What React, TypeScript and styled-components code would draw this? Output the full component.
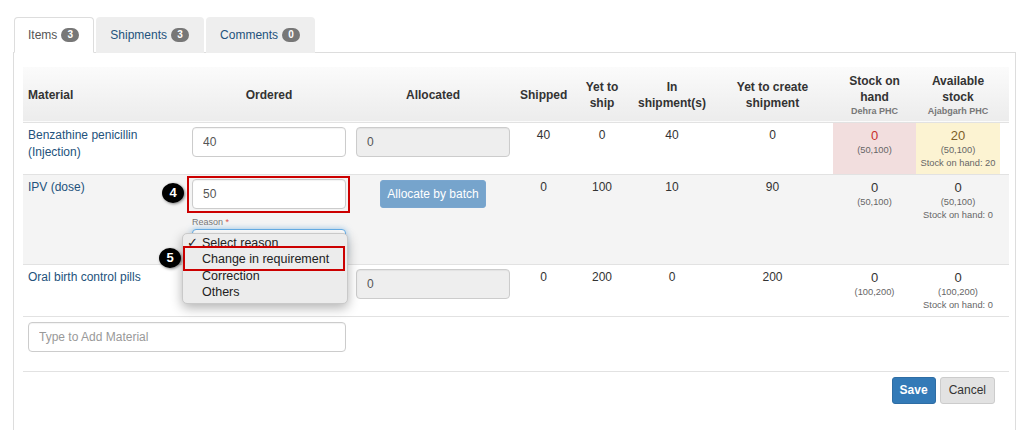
import React from 'react';
import styled, { createGlobalStyle, css } from 'styled-components';

const GlobalStyle = createGlobalStyle`
  html, body {
    margin: 0;
    padding: 0;
    background: #fff;
  }
  body {
    font-family: "Liberation Sans", Arial, Helvetica, sans-serif;
    font-size: 12px;
    color: #333;
  }
  * {
    box-sizing: border-box;
  }
`;

const Page = styled.div`
  padding: 17px 0 0 13px;
  width: 1016px;
`;

const TabList = styled.ul`
  list-style: none;
  margin: 0;
  padding: 0 0 0 1px;
  display: flex;
  gap: 2px;
  height: 35px;
  position: relative;
  z-index: 1;
`;

const Tab = styled.li<{ $active?: boolean }>`
  height: 36px;
  padding: 0 14px 0 13px;
  display: flex;
  align-items: center;
  gap: 4px;
  border: 1px solid transparent;
  border-radius: 4px 4px 0 0;
  font-size: 12px;
  color: #23527c;
  background: #eee;
  ${p =>
    p.$active &&
    css`
      background: #fff;
      color: #555;
      border-color: #ddd #ddd transparent #ddd;
    `}
`;

const Badge = styled.span`
  display: inline-block;
  min-width: 18px;
  height: 14px;
  padding: 0 4px;
  border-radius: 7px;
  background: #777;
  color: #fff;
  font-size: 10px;
  font-weight: bold;
  line-height: 14px;
  text-align: center;
`;

const Panel = styled.div`
  width: 1003px;
  border: 1px solid #ddd;
  padding: 14px 5px 30px 9px;
`;

const Table = styled.table`
  width: 986px;
  table-layout: fixed;
  border-collapse: collapse;
  border-spacing: 0;
`;

const HeadRow = styled.tr`
  height: 55px;
  background: linear-gradient(to bottom, #fbfbfb 0%, #ececec 100%);
  border-bottom: 1px solid #e2e2e2;
`;

const Th = styled.th<{ $left?: boolean }>`
  font-weight: bold;
  font-size: 12px;
  line-height: 16px;
  color: #333;
  text-align: ${p => (p.$left ? 'left' : 'center')};
  vertical-align: middle;
  padding: 2px 5px 0;
`;

const SubHead = styled.div`
  font-size: 9px;
  line-height: 12px;
  color: #777;
`;

const Row = styled.tr<{ $shade?: boolean; $h: number }>`
  height: ${p => p.$h}px;
  background: ${p => (p.$shade ? '#f4f4f4' : '#fff')};
  border-bottom: 1px solid #e2e2e2;
`;

const Td = styled.td<{ $tone?: 'danger' | 'warning'; $left?: boolean }>`
  vertical-align: top;
  padding: 4px 5px;
  line-height: 17px;
  font-size: 12px;
  text-align: ${p => (p.$left ? 'left' : 'center')};
  background: ${p =>
    p.$tone === 'danger' ? '#f2dede' : p.$tone === 'warning' ? '#fcf3d2' : 'transparent'};
`;

const StockTd = styled(Td)`
  padding: 4px 1px;
  white-space: nowrap;
`;

const OrderedTd = styled(Td)`
  position: relative;
`;

const MaterialName = styled.span`
  color: #23527c;
  display: block;
`;

const Input = styled.input<{ $disabled?: boolean }>`
  display: block;
  width: 100%;
  height: 30px;
  padding: 0 10px;
  border: 1px solid #ccc;
  border-radius: 4px;
  font-family: inherit;
  font-size: 12px;
  color: #555;
  background: ${p => (p.$disabled ? '#eee' : '#fff')};
  box-shadow: inset 0 1px 1px rgba(0, 0, 0, 0.05);
  outline: none;

  &::placeholder {
    color: #999;
  }
`;

const Label = styled.div`
  margin-top: 7px;
  text-align: left;
  font-size: 9px;
  line-height: 12px;
  color: #777;

  span {
    color: #d9534f;
  }
`;

const FakeSelect = styled.div`
  margin-top: 1px;
  height: 30px;
  border: 1px solid #66afe9;
  border-radius: 4px;
  background: #fff;
  box-shadow: 0 0 6px rgba(102, 175, 233, 0.6);
`;

const BatchButton = styled.button`
  margin: 1px auto 0;
  display: block;
  width: 106px;
  height: 28px;
  border: 1px solid #7aa6cf;
  border-radius: 3px;
  background: #76a4cc;
  color: #fff;
  font-family: inherit;
  font-size: 12px;
  padding: 0;
`;

const StockValue = styled.div<{ $tone?: 'danger' | 'warning' }>`
  font-size: 13px;
  line-height: 17px;
  color: ${p => (p.$tone === 'danger' ? '#c9302c' : p.$tone === 'warning' ? '#7d5f2a' : '#333')};
`;

const StockNote = styled.div`
  font-size: 9.3px;
  line-height: 13px;
  color: #666;
`;

const AddRow = styled.tr`
  height: 55px;
  border-bottom: 1px solid #e2e2e2;
`;

const AddTd = styled.td`
  vertical-align: top;
  padding: 5px 5px 0 5px;
`;

const Footer = styled.div`
  display: flex;
  justify-content: flex-end;
  gap: 4px;
  padding: 5px 14px 0 0;
  width: 986px;
`;

const Button = styled.button<{ $primary?: boolean }>`
  height: 27px;
  padding: 0 ${p => (p.$primary ? 7 : 8)}px;
  border-radius: 3px;
  font-family: inherit;
  font-size: 12px;
  border: 1px solid ${p => (p.$primary ? '#2e6da4' : '#ccc')};
  background: ${p => (p.$primary ? '#337ab7' : '#e2e2e2')};
  color: ${p => (p.$primary ? '#fff' : '#333')};
  font-weight: ${p => (p.$primary ? 'bold' : 'normal')};
`;

/* overlays: native select popup and tutorial call-outs */

const Callout = styled.div<{ $x: number; $y: number; $w: number; $h: number }>`
  position: absolute;
  left: ${p => p.$x}px;
  top: ${p => p.$y}px;
  width: ${p => p.$w}px;
  height: ${p => p.$h}px;
  border: 2px solid #cc0000;
  z-index: 4;
  pointer-events: none;
`;

const Step = styled.div<{ $x: number; $y: number }>`
  position: absolute;
  left: ${p => p.$x}px;
  top: ${p => p.$y}px;
  width: 22px;
  height: 20px;
  border-radius: 50%;
  background: #000;
  color: #fff;
  font-weight: bold;
  font-size: 13px;
  line-height: 20px;
  text-align: center;
  box-shadow: 1px 1px 3px rgba(0, 0, 0, 0.5);
  z-index: 5;
`;

const Popup = styled.ul`
  position: absolute;
  left: -5px;
  top: 58px;
  width: 166px;
  height: 71px;
  margin: 0;
  padding: 1px 0 0;
  list-style: none;
  background: #ececec;
  border: 1px solid #c9c9c9;
  border-radius: 5px;
  box-shadow: 0 4px 12px rgba(0, 0, 0, 0.3);
  z-index: 3;
  text-align: left;
`;

const PopupItem = styled.li`
  position: relative;
  height: 16.5px;
  line-height: 16.5px;
  padding-left: 19px;
  font-size: 12.5px;
  color: #222;
  white-space: nowrap;
`;

const Check = styled.span`
  position: absolute;
  left: 4px;
  top: 0;
`;

type Stock = { value: string; range: string; note?: string; tone?: 'danger' | 'warning' };

const StockCell = ({ s }: { s: Stock }) => (
  <StockTd $tone={s.tone}>
    <StockValue $tone={s.tone}>{s.value}</StockValue>
    <StockNote>{s.range}</StockNote>
    {s.note && <StockNote>{s.note}</StockNote>}
  </StockTd>
);

const widths = [164, 164, 164, 57, 60, 80, 121, 83, 84, 9];

export default function App() {
  return (
    <Page>
      <GlobalStyle />
      <TabList>
        <Tab $active>
          Items <Badge>3</Badge>
        </Tab>
        <Tab>
          Shipments <Badge>3</Badge>
        </Tab>
        <Tab>
          Comments <Badge>0</Badge>
        </Tab>
      </TabList>
      <Panel>
        <Table>
          <colgroup>
            {widths.map((w, i) => (
              <col key={i} style={{ width: w }} />
            ))}
          </colgroup>
          <thead>
            <HeadRow>
              <Th $left>Material</Th>
              <Th>Ordered</Th>
              <Th>Allocated</Th>
              <Th>Shipped</Th>
              <Th>
                Yet to
                <br />
                ship
              </Th>
              <Th>
                In
                <br />
                shipment(s)
              </Th>
              <Th>
                Yet to create
                <br />
                shipment
              </Th>
              <Th>
                Stock on
                <br />
                hand
                <SubHead>Dehra PHC</SubHead>
              </Th>
              <Th>
                Available
                <br />
                stock
                <SubHead>Ajabgarh PHC</SubHead>
              </Th>
              <Th />
            </HeadRow>
          </thead>
          <tbody>
            <Row $h={51}>
              <Td $left>
                <MaterialName>
                  Benzathine penicillin
                  <br />
                  (Injection)
                </MaterialName>
              </Td>
              <Td>
                <Input defaultValue="40" />
              </Td>
              <Td>
                <Input $disabled readOnly defaultValue="0" />
              </Td>
              <Td>40</Td>
              <Td>0</Td>
              <Td>40</Td>
              <Td>0</Td>
              <StockCell s={{ value: '0', range: '(50,100)', tone: 'danger' }} />
              <StockCell s={{ value: '20', range: '(50,100)', note: 'Stock on hand: 20', tone: 'warning' }} />
              <Td />
            </Row>
            <Row $h={90} $shade>
              <Td $left>
                <MaterialName>IPV (dose)</MaterialName>
              </Td>
              <OrderedTd>
                <Input defaultValue="50" />
                <Label>
                  Reason <span>*</span>
                </Label>
                <FakeSelect />
                <Callout $x={0} $y={1} $w={163} $h={37} />
                <Step $x={-25} $y={8}>4</Step>
                <Popup>
                  <PopupItem>
                    <Check>✓</Check>Select reason
                  </PopupItem>
                  <PopupItem>Change in requirement</PopupItem>
                  <PopupItem>Correction</PopupItem>
                  <PopupItem>Others</PopupItem>
                </Popup>
                <Callout $x={-4} $y={71} $w={162} $h={25} />
                <Step $x={-28} $y={73}>5</Step>
              </OrderedTd>
              <Td>
                <BatchButton>Allocate by batch</BatchButton>
              </Td>
              <Td>0</Td>
              <Td>100</Td>
              <Td>10</Td>
              <Td>90</Td>
              <StockCell s={{ value: '0', range: '(50,100)' }} />
              <StockCell s={{ value: '0', range: '(50,100)', note: 'Stock on hand: 0' }} />
              <Td />
            </Row>
            <Row $h={52}>
              <Td $left>
                <MaterialName>Oral birth control pills</MaterialName>
              </Td>
              <Td>
                <Input defaultValue="" />
              </Td>
              <Td>
                <Input $disabled readOnly defaultValue="0" />
              </Td>
              <Td>0</Td>
              <Td>200</Td>
              <Td>0</Td>
              <Td>200</Td>
              <StockCell s={{ value: '0', range: '(100,200)' }} />
              <StockCell s={{ value: '0', range: '(100,200)', note: 'Stock on hand: 0' }} />
              <Td />
            </Row>
            <AddRow>
              <AddTd colSpan={2}>
                <Input placeholder="Type to Add Material" />
              </AddTd>
              <AddTd colSpan={8} />
            </AddRow>
          </tbody>
        </Table>
        <Footer>
          <Button $primary>Save</Button>
          <Button>Cancel</Button>
        </Footer>
      </Panel>
    </Page>
  );
}
